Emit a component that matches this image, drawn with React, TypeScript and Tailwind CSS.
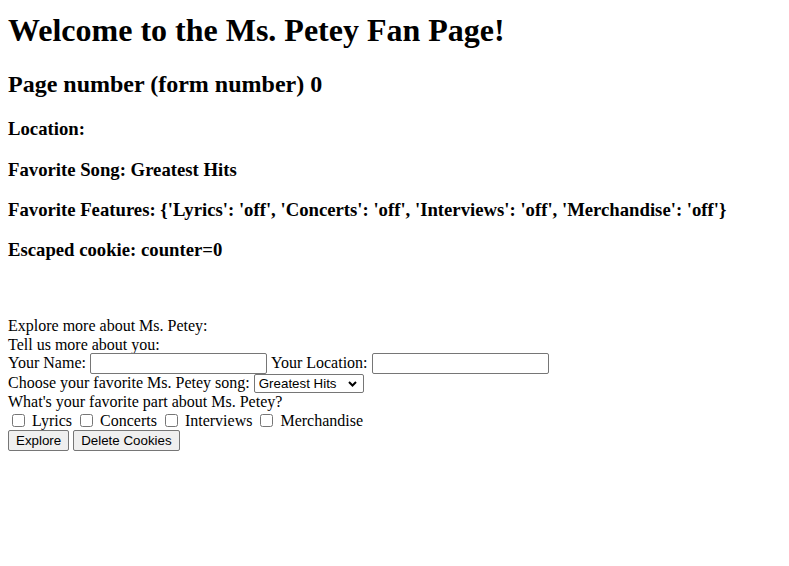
import { useState } from "react";

const serif = "font-['Liberation_Serif','Times_New_Roman',serif]";
const control = "font-['Liberation_Sans',Arial,sans-serif] text-[13.33px]";

export default function App() {
  const [song, setSong] = useState("Greatest Hits");

  return (
    <div className={`${serif} text-black text-base bg-white min-h-[566px] px-2 pt-[12px] flow-root`}>
      <h1 className="text-[32px] font-bold leading-[37px] mb-[21.44px]">
        Welcome to the Ms. Petey Fan Page!
      </h1>
      <h2 className="text-[24px] font-bold leading-[28px] my-[19.92px]">
        Page number (form number) 0
      </h2>
      <h3 className="text-[18.72px] font-bold leading-[21.5px] my-[18.72px]">Location:</h3>
      <h3 className="text-[18.72px] font-bold leading-[21.5px] my-[18.72px]">
        Favorite Song: Greatest Hits
      </h3>
      <h3 className="text-[18.72px] font-bold leading-[21.5px] my-[18.72px]">
        Favorite Features: {"{'Lyrics': 'off', 'Concerts': 'off', 'Interviews': 'off', 'Merchandise': 'off'}"}
      </h3>
      <h3 className="text-[18.72px] font-bold leading-[21.5px] my-[18.72px]">
        Escaped cookie: counter=0
      </h3>
      <div className="h-[38px]" />
      <form className="leading-[18.4px]" onSubmit={(e) => e.preventDefault()}>
        <div>Explore more about Ms. Petey:</div>
        <div>Tell us more about you:</div>
        <div className="flex items-center h-[19px]">
          <label>Your Name:</label>
          <input
            type="text"
            className={`${control} ml-1 w-[177px] h-[21px] border border-[#767676] rounded-[2px] px-[2px] bg-white`}
          />
          <label className="ml-1">Your Location:</label>
          <input
            type="text"
            className={`${control} ml-1 w-[177px] h-[21px] border border-[#767676] rounded-[2px] px-[2px] bg-white`}
          />
        </div>
        <div className="flex items-center h-[20px]">
          <label>Choose your favorite Ms. Petey song:</label>
          <div className="relative ml-1">
            <select
              value={song}
              onChange={(e) => setSong(e.target.value)}
              className={`${control} appearance-none w-[110px] h-[19px] pl-[4px] border border-[#767676] rounded-[2px] bg-white`}
            >
              <option>Greatest Hits</option>
              <option>Love Song</option>
              <option>Encore</option>
            </select>
            <svg
              className="absolute right-[7px] top-[7px] pointer-events-none"
              width="9"
              height="6"
              viewBox="0 0 9 6"
            >
              <path d="M1 1 L4.5 4.5 L8 1" fill="none" stroke="#000" strokeWidth="2" />
            </svg>
          </div>
        </div>
        <div>What's your favorite part about Ms. Petey?</div>
        <div className="flex items-center h-[19px]">
          {["Lyrics", "Concerts", "Interviews", "Merchandise"].map((f) => (
            <label key={f} className="flex items-center">
              <input type="checkbox" className="w-[13px] h-[13px] ml-1 mr-[3px]" />
              <span className="ml-1 mr-[4px]">{f}</span>
            </label>
          ))}
        </div>
        <div className="flex items-center gap-1 h-[21px]">
          <button
            type="submit"
            className={`${control} h-[21px] px-[7px] bg-[#efefef] border border-[#767676] rounded-[2px]`}
          >
            Explore
          </button>
          <button
            type="button"
            className={`${control} h-[21px] px-[7px] bg-[#efefef] border border-[#767676] rounded-[2px]`}
          >
            Delete Cookies
          </button>
        </div>
      </form>
    </div>
  );
}
